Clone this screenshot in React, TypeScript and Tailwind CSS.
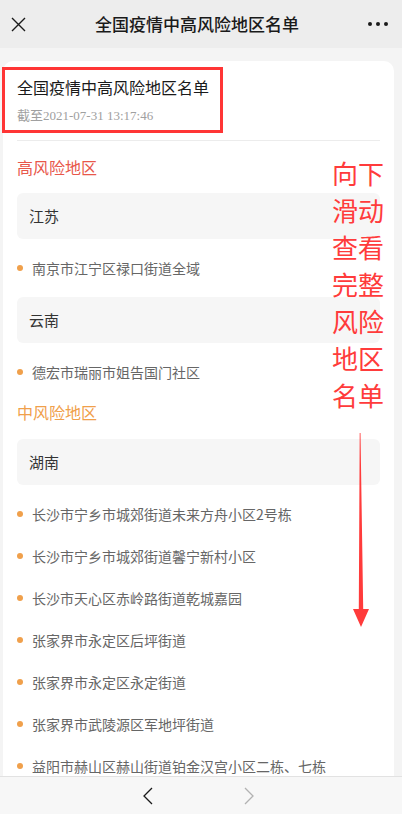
import React from 'react';

const cjk = { fontFamily: '"Noto Sans CJK SC", "Noto Sans", sans-serif' };

type Group = { province: string; places: string[] };

const highRisk: Group[] = [
  { province: '江苏', places: ['南京市江宁区禄口街道全域'] },
  { province: '云南', places: ['德宏市瑞丽市姐告国门社区'] },
];

const midRisk: Group[] = [
  {
    province: '湖南',
    places: [
      '长沙市宁乡市城郊街道未来方舟小区2号栋',
      '长沙市宁乡市城郊街道馨宁新村小区',
      '长沙市天心区赤岭路街道乾城嘉园',
      '张家界市永定区后坪街道',
      '张家界市永定区永定街道',
      '张家界市武陵源区军地坪街道',
      '益阳市赫山区赫山街道铂金汉宫小区二栋、七栋',
    ],
  },
];

const ProvinceBlock: React.FC<{ group: Group; first?: boolean }> = ({ group, first }) => (
  <div className={first ? '' : 'mt-2'}>
    <div className="h-[46px] rounded-md bg-[#f6f6f6] flex items-center pl-3 text-[15px] text-[#333]">
      {group.province}
    </div>
    <ul className="mt-2">
      {group.places.map((p) => (
        <li key={p} className="h-[42px] flex items-center text-[14px] text-[#666]">
          <span className="w-[6px] h-[6px] rounded-full bg-[#f0a04b] mr-[9px] shrink-0" />
          <span className="whitespace-nowrap">{p}</span>
        </li>
      ))}
    </ul>
  </div>
);

const App: React.FC = () => {
  return (
    <div className="w-[402px] h-[814px] flex flex-col bg-[#f4f4f4] overflow-hidden" style={cjk}>
      {/* top nav */}
      <header className="h-12 bg-[#ededed] flex items-center justify-between px-3 shrink-0">
        <svg width="15" height="15" viewBox="0 0 15 15" className="ml-[-1px]">
          <path d="M1 1 L14 14 M14 1 L1 14" stroke="#1a1a1a" strokeWidth="1.4" fill="none" />
        </svg>
        <h1 className="text-[17px] font-medium text-[#1a1a1a]">全国疫情中高风险地区名单</h1>
        <div className="flex gap-[2px] mr-[2px]">
          <span className="w-1 h-1 rounded-full bg-[#1a1a1a]" />
          <span className="w-1 h-1 rounded-full bg-[#1a1a1a] mx-[2px]" />
          <span className="w-1 h-1 rounded-full bg-[#1a1a1a]" />
        </div>
      </header>

      <main className="flex-1 overflow-hidden pt-[13px] pl-[3px] pr-[8px] relative">
        <div className="bg-white rounded-t-[10px] px-[14px] h-full relative">
          <div className="pt-[15px]">
            <p className="text-[16px] leading-[22px] text-[#1a1a1a]">全国疫情中高风险地区名单</p>
            <p
              className="mt-[9px] text-[13px] leading-[18px] text-[#a0a0a0]"
              style={{ fontFamily: '"Liberation Serif", "Noto Sans CJK SC", serif' }}
            >
              截至2021-07-31 13:17:46
            </p>
          </div>
          <div className="mt-[15px] h-px bg-[#ececec]" />

          <h2 className="mt-[14px] text-[16px] leading-6 text-[#e8574b]">高风险地区</h2>
          <div className="mt-[14px]">
            {highRisk.map((g, i) => (
              <ProvinceBlock key={g.province} group={g} first={i === 0} />
            ))}
          </div>

          <h2 className="mt-[7px] text-[16px] leading-6 text-[#f0a04b]">中风险地区</h2>
          <div className="mt-[15px]">
            {midRisk.map((g, i) => (
              <ProvinceBlock key={g.province} group={g} first={i === 0} />
            ))}
          </div>
        </div>

        {/* annotation: red frame round the heading */}
        <div className="absolute left-[2px] top-[19px] w-[221px] h-[66px] border-[3px] border-[#ff3535]" />

        {/* annotation: scroll hint */}
        <div className="absolute left-[332px] top-[106px] w-[56px] text-[26px] leading-[37px] text-[#ff3b3b]">
          向下滑动查看完整风险地区名单
        </div>
        <svg className="absolute left-[351px] top-[383px]" width="20" height="200" viewBox="0 0 20 200">
          <path d="M8.7 2 L9.5 2 L12.2 178 L18 178 L10 196 L2 178 L7.8 178 Z" fill="#ff3b3b" />
        </svg>
      </main>

      {/* bottom toolbar */}
      <footer className="h-[38px] shrink-0 bg-[#f7f7f7] border-t border-[#e2e2e2] flex items-center justify-center gap-[89px] pr-[5px]">
        <svg width="12" height="18" viewBox="0 0 12 18">
          <path d="M10 1 L2 9 L10 17" stroke="#1a1a1a" strokeWidth="1.3" fill="none" />
        </svg>
        <svg width="12" height="18" viewBox="0 0 12 18">
          <path d="M2 1 L10 9 L2 17" stroke="#b2b2b2" strokeWidth="1.3" fill="none" />
        </svg>
      </footer>
    </div>
  );
};

export default App;
